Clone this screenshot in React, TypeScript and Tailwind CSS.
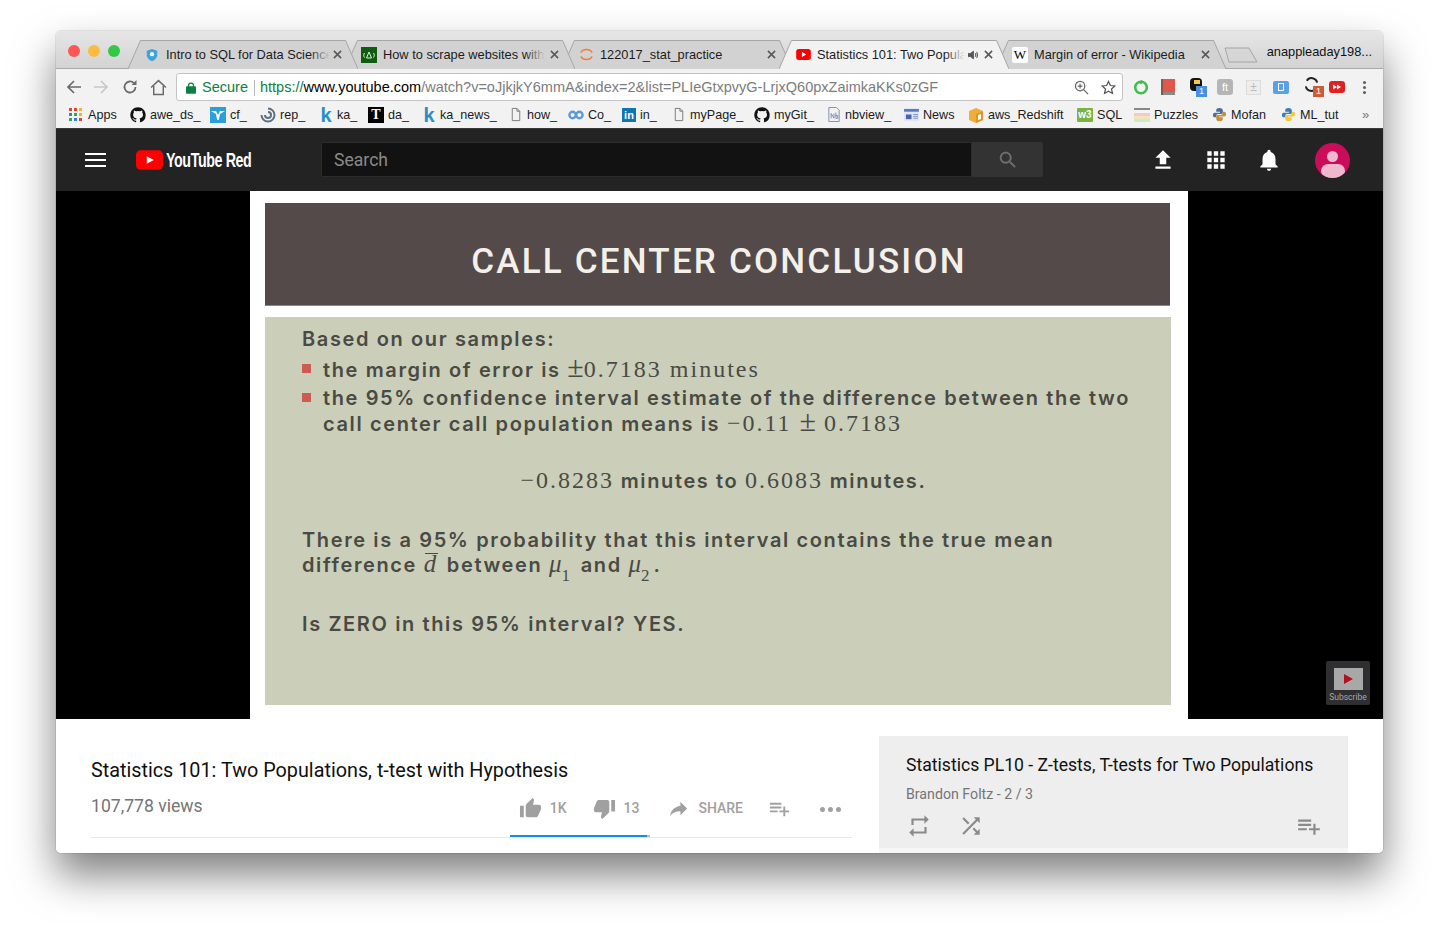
import React from "react";

const MD = ({ d, className }: { d: string; className?: string }) => (
  <svg viewBox="0 0 24 24" className={className} fill="currentColor"><path d={d} /></svg>
);
const P = {
  up: "M1 21h4V9H1v12zm22-11c0-1.1-.9-2-2-2h-6.31l.95-4.57.03-.32c0-.41-.17-.79-.44-1.06L14.17 1 7.59 7.59C7.22 7.95 7 8.45 7 9v10c0 1.1.9 2 2 2h9c.83 0 1.54-.5 1.84-1.22l3.02-7.05c.09-.23.14-.47.14-.73v-1.91l-.01-.01L23 10z",
  down: "M15 3H6c-.83 0-1.54.5-1.84 1.22l-3.02 7.05c-.09.23-.14.47-.14.73v1.91l.01.01L1 14c0 1.1.9 2 2 2h6.31l-.95 4.57-.03.32c0 .41.17.79.44 1.06L9.83 23l6.59-6.59c.36-.36.58-.86.58-1.41V5c0-1.1-.9-2-2-2zm4 0v12h4V3h-4z",
  share: "M14 9V5l7 7-7 7v-4.1c-5 0-8.5 1.6-11 5.1 1-5 4-10 11-11z",
  add: "M14 10H2v2h12v-2zm0-4H2v2h12V6zm4 8v-4h-2v4h-4v2h4v4h2v-4h4v-2h-4zM2 16h8v-2H2v2z",
  repeat: "M7 7h10v3l4-4-4-4v3H5v6h2V7zm10 10H7v-3l-4 4 4 4v-3h12v-6h-2v4z",
  shuffle: "M10.59 9.17L5.41 4 4 5.41l5.17 5.17 1.42-1.41zM14.5 4l2.04 2.04L4 18.59 5.41 20 17.96 7.46 20 9.5V4h-5.5zm.33 9.41l-1.41 1.41 3.13 3.13L14.5 20H20v-5.5l-2.04 2.04-3.13-3.13z",
  upload: "M9 16h6v-6h4l-7-7-7 7h4zm-4 2h14v2H5z",
  apps: "M4 8h4V4H4v4zm6 12h4v-4h-4v4zm-6 0h4v-4H4v4zm0-6h4v-4H4v4zm6 0h4v-4h-4v4zm6-10v4h4V4h-4zm-6 4h4V4h-4v4zm6 6h4v-4h-4v4zm0 6h4v-4h-4v4z",
  bell: "M12 22c1.1 0 2-.9 2-2h-4c0 1.1.89 2 2 2zm6-6v-5c0-3.07-1.64-5.64-4.5-6.32V4c0-.83-.67-1.5-1.5-1.5s-1.5.67-1.5 1.5v.68C7.63 5.36 6 7.92 6 11v5l-2 2v1h16v-1l-2-2z",
  search: "M15.5 14h-.79l-.28-.27C15.41 12.59 16 11.11 16 9.5 16 5.91 13.09 3 9.5 3S3 5.91 3 9.5 5.91 16 9.5 16c1.61 0 3.09-.59 4.23-1.57l.27.28v.79l5 4.99L20.49 19l-4.99-5zm-6 0C7.01 14 5 11.99 5 9.5S7.01 5 9.5 5 14 7.01 14 9.5 11.99 14 9.5 14z",
  github: "M12 .5C5.6.5.5 5.6.5 12c0 5.1 3.3 9.4 7.9 10.9.6.1.8-.2.8-.6v-2c-3.2.7-3.9-1.5-3.9-1.5-.5-1.3-1.3-1.7-1.3-1.7-1-.7.1-.7.1-.7 1.2.1 1.8 1.2 1.8 1.2 1 1.8 2.7 1.3 3.4 1 .1-.8.4-1.3.7-1.6-2.6-.3-5.3-1.3-5.3-5.7 0-1.3.5-2.3 1.2-3.1-.1-.3-.5-1.5.1-3.1 0 0 1-.3 3.2 1.2a11 11 0 0 1 5.8 0c2.2-1.5 3.2-1.2 3.2-1.2.6 1.6.2 2.8.1 3.1.7.8 1.2 1.9 1.2 3.1 0 4.4-2.7 5.4-5.3 5.7.4.4.8 1.1.8 2.2v3.2c0 .3.2.7.8.6A11.5 11.5 0 0 0 23.5 12C23.5 5.6 18.4.5 12 .5z",
};

const Doc = () => (
  <svg viewBox="0 0 14 16" className="w-[14px] h-[15px]" fill="none" stroke="#777" strokeWidth="1"><path d="M3 1.5h5l3 3v10H3zM8 1.5v3h3" /></svg>
);
const Gh = () => <MD d={P.github} className="w-4 h-4 text-[#111]" />;
const K = () => <span className="w-[14px] text-center text-[20px] leading-4 font-bold text-[#2b8fc4] [font-family:'Liberation_Sans',sans-serif]">k</span>;

const AppsI = () => (
  <div className="grid grid-cols-3 gap-[1.5px] w-[13px] h-[13px] mr-[2px]">
    {["bg-[#e0452f]","bg-[#e0452f]","bg-[#f0b429]","bg-[#3b78e7]","bg-[#2ea84f]","bg-[#f0b429]","bg-[#2ea84f]","bg-[#3b78e7]","bg-[#e0452f]"].map((c, i) => (
      <span key={i} className={c + " w-[3px] h-[3px]"} />
    ))}
  </div>
);
const Cf = () => (
  <div className="w-4 h-4 bg-[#2a9fd8] flex items-center justify-center text-white">
    <svg viewBox="0 0 16 16" className="w-4 h-4" fill="#fff"><path d="M1 4h5l2 4 2-4h5l-5 3-1.2 6H7.2L6 7z" /></svg>
  </div>
);
const Rep = () => (
  <svg viewBox="0 0 16 16" className="w-4 h-4" fill="none" stroke="#5c7080" strokeWidth="2"><path d="M8 1.500a6.500 6.500 0 1 1-6.500 6.500M8 5a3 3 0 1 1-3 3" /></svg>
);
const Tt = () => (
  <div className="w-4 h-4 bg-black text-white text-[14px] leading-4 font-bold text-center [font-family:'Liberation_Serif',serif]">T</div>
);
const Co = () => (
  <svg viewBox="0 0 16 10" className="w-4 h-[10px]" fill="none" stroke="#5b9bd5" strokeWidth="2.4"><circle cx="4.6" cy="5" r="3.2" /><circle cx="11.4" cy="5" r="3.2" /></svg>
);
const In = () => (
  <div className="w-[14px] h-[14px] bg-[#0f76b0] text-white text-[11px] leading-[14px] font-bold text-center [font-family:'Liberation_Sans',sans-serif]">in</div>
);
const Nb = () => (
  <svg viewBox="0 0 14 16" className="w-[14px] h-[15px]" fill="none" stroke="#6b83a8" strokeWidth="0.9"><path d="M1.5.5h8l3 3v12h-11zM4 12V7l3 5V7M9 6v6h2V9H9" /></svg>
);
const NewsI = () => (
  <svg viewBox="0 0 16 14" className="w-[15px] h-[13px]"><rect y="1" width="16" height="13" fill="#dfe5f2" /><rect y="1" width="16" height="3" fill="#5c79c6" /><rect x="2" y="7" width="6" height="5" fill="#4a63ad" /><path d="M10 7h5M10 9h5M10 11h5" stroke="#7a8cc0" /></svg>
);
const Aws = () => (
  <svg viewBox="0 0 16 16" className="w-4 h-4"><path d="M8 1l7 3v9l-7 3-7-3V4z" fill="#f0ad3a" /><path d="M8 7v9l7-3V4z" fill="#e0952a" /><path d="M10 8l3-1v5l-3 1z" fill="#fff" /></svg>
);
const W3 = () => (
  <div className="w-4 h-[14px] bg-[#7ab342] rounded-[1px] text-white text-[10px] leading-[14px] font-bold text-center [font-family:'Liberation_Sans',sans-serif]">w3</div>
);
const Puz = () => (
  <div className="w-4 h-[14px] flex flex-col">
    <span className="h-[2px] bg-[#888]" /><span className="h-[3px] bg-[#f4f4f4]" /><span className="h-[3px] bg-[#f3c9c9]" /><span className="h-[3px] bg-[#f2e6b8]" /><span className="h-[3px] bg-[#c9ecc6]" />
  </div>
);
const Py = ({ m }: { m?: boolean }) => (
  <svg viewBox="0 0 16 16" className="w-[15px] h-[15px]">
    <path d="M8 1C5 1 4.500 2 4.500 3.500V5H8.500V6H3C1.500 6 1 7 1 8.500S1.500 11 3 11H4.500V9.500C4.500 8 5.500 7.500 7 7.500H10C11 7.500 11.500 7 11.500 6V3.500C11.500 2 10.500 1 8 1z" fill={m ? "#48709a" : "#3f7cb5"} />
    <path d="M8 15C11 15 11.500 14 11.500 12.500V11H7.500V10H13C14.500 10 15 9 15 7.500S14.500 5 13 5H11.500V6.500C11.500 8 10.500 8.500 9 8.500H6C5 8.500 4.500 9 4.500 10V12.500C4.500 14 5.500 15 8 15z" fill={m ? "#c58f3a" : "#f3c83d"} />
  </svg>
);

const bookmarks: [React.ReactNode, string, string][] = [
  [<AppsI />, "Apps", "w-[61px]"],
  [<Gh />, "awe_ds_", "w-[80px]"],
  [<Cf />, "cf_", "w-[50px]"],
  [<Rep />, "rep_", "w-[59px]"],
  [<K />, "ka_", "w-[49px]"],
  [<Tt />, "da_", "w-[54px]"],
  [<K />, "ka_news_", "w-[87px]"],
  [<Doc />, "how_", "w-[59px]"],
  [<Co />, "Co_", "w-[54px]"],
  [<In />, "in_", "w-[50px]"],
  [<Doc />, "myPage_", "w-[82px]"],
  [<Gh />, "myGit_", "w-[73px]"],
  [<Nb />, "nbview_", "w-[77px]"],
  [<NewsI />, "News", "w-[64px]"],
  [<Aws />, "aws_Redshift", "w-[109px]"],
  [<W3 />, "SQL", "w-[57px]"],
  [<Puz />, "Puzzles", "w-[78px]"],
  [<Py m />, "Mofan", "w-[69px]"],
  [<Py />, "ML_tut", "w-[83px]"],
];

const Tab = ({ z, icon, title, active, fade, speaker, cls }: { z: string; icon: React.ReactNode; title: string; active?: boolean; fade?: boolean; speaker?: boolean; cls: string }) => (
  <div className={`relative h-[29px] w-[230px] shrink-0 ${z}`}>
    <svg viewBox="0 0 100 29" preserveAspectRatio="none" className="absolute inset-0 w-full h-full">
      <path d="M0 29 L5.400 0.500 L94.600 0.500 L100 29" fill={active ? "#f2f2f2" : "#d2d2d2"} stroke="#a6a6a6" strokeWidth="1" vectorEffect="non-scaling-stroke" />
    </svg>
    <div className="relative h-full flex items-center pl-[16px] pr-[16px]">
      <span className="w-[16px] h-[16px] shrink-0 flex items-center justify-center">{icon}</span>
      <span className={`relative ml-[6px] overflow-hidden whitespace-nowrap text-[12.800px] leading-4 text-[#1c1c1c] ${cls}`}>
        {title}
        {fade && <span className={`absolute right-0 top-0 h-full w-5 bg-gradient-to-r from-transparent ${active ? "to-[#f2f2f2]" : "to-[#d2d2d2]"}`} />}
      </span>
      {speaker && (
        <svg viewBox="0 0 14 12" className="w-[11px] h-[10px] ml-[3px] shrink-0" fill="#555"><path d="M0 4h3l4-3v10L3 8H0zM9 3.500c1 1.500 1 3.500 0 5M11 2c1.700 2.500 1.700 5.500 0 8" stroke="#555" strokeWidth="1" /></svg>
      )}
      <svg viewBox="0 0 10 10" className="ml-auto w-[9px] h-[9px] shrink-0" stroke="#5a5a5a" strokeWidth="1.800"><path d="M1 1l8 8M9 1l-8 8" /></svg>
    </div>
  </div>
);

const Mu = ({ n }: { n: string }) => (
  <span className="[font-family:'Liberation_Serif',serif] font-normal italic text-[25px] leading-[20px] tracking-[0px] mr-[4px]">
    μ<sub className="not-italic text-[17px] align-[-5px] leading-none">{n}</sub>
  </span>
);
const S = ({ children }: { children: React.ReactNode }) => (
  <span className="[font-family:'Liberation_Serif',serif] font-normal text-[24px] leading-[20px] tracking-[2px]">{children}</span>
);
const PM = () => <span className="text-[30px] leading-[20px] tracking-[0px]">±</span>;
const Bullet = () => <span className="w-[9px] h-[9px] bg-[#cd5b50] shrink-0 mt-[7px] mr-[12px]" />;

export default function App() {
  return (
    <div className="w-[1439px] h-[933px] bg-white pt-[31px] pl-[56px] overflow-hidden [font-family:'Liberation_Sans',Arial,sans-serif]">
      <div className="w-[1327px] h-[822px] rounded-[5px] overflow-hidden flex flex-col bg-white shadow-[0_0_0_1px_rgba(0,0,0,0.08),0_22px_42px_rgba(0,0,0,0.5)]">
        {/* tab strip */}
        <div className="h-[38px] shrink-0 bg-gradient-to-b from-[#e6e6e6] to-[#d3d3d3] border-b border-[#a9a9a9] flex items-end relative">
          <div className="flex gap-[8px] self-start mt-[14px] ml-[12px] mr-[8px]">
            <span className="w-3 h-3 rounded-full bg-[#fc5753]" />
            <span className="w-3 h-3 rounded-full bg-[#fdbc40]" />
            <span className="w-3 h-3 rounded-full bg-[#33c748]" />
          </div>
          <div className="flex items-end -mb-[1px] -space-x-[13px]">
            <Tab z="z-50" cls="w-[164px]" fade title="Intro to SQL for Data Science" icon={
              <svg viewBox="0 0 16 16" className="w-[14px] h-[14px]"><path d="M8 1l6 2v5c0 3.500-2.500 5.800-6 7-3.500-1.200-6-3.500-6-7V3z" fill="#3aa6d8" /><circle cx="8" cy="7" r="2.400" fill="#fff" /></svg>
            } />
            <Tab z="z-40" cls="w-[162px]" fade title="How to scrape websites with Python" icon={
              <div className="w-4 h-4 bg-[#0e5c12] flex items-center justify-center"><svg viewBox="0 0 16 16" className="w-4 h-4" fill="none" stroke="#d9f2d9" strokeWidth="1"><path d="M5.500 11L8 5l2.500 6zM3.500 6c-1 1.500-1 3 0 4.500M12.500 6c1 1.500 1 3 0 4.500" /></svg></div>
            } />
            <Tab z="z-30" cls="w-[140px]" title="122017_stat_practice" icon={
              <svg viewBox="0 0 16 16" className="w-[15px] h-[15px]" fill="none" stroke="#f1802e" strokeWidth="1.500"><path d="M2 6c2-4.500 10-4.500 12 0M2 10c2 4.500 10 4.500 12 0" /></svg>
            } />
            <Tab z="z-[60]" cls="w-[148px]" active fade speaker title="Statistics 101: Two Populations, t-test" icon={
              <svg viewBox="0 0 16 12" className="w-[15px] h-[11px]"><rect width="16" height="12" rx="3" fill="#f00" /><path d="M6.300 3.400L11 6 6.300 8.600z" fill="#fff" /></svg>
            } />
            <Tab z="z-10" cls="w-[156px]" title="Margin of error - Wikipedia" icon={
              <div className="w-4 h-4 bg-white rounded-[2px] text-[13px] leading-4 text-center text-black [font-family:'Liberation_Serif',serif]">W</div>
            } />
          </div>
          <svg viewBox="0 0 34 16" className="w-[34px] h-[16px] -ml-[2px] mb-[5px] shrink-0"><path d="M1 1H25L33 15H5z" fill="#d6d6d6" stroke="#a6a6a6" /></svg>
          <span className="absolute right-[11px] top-[13px] text-[12.800px] leading-4 text-[#111] z-10">anappleaday198...</span>
        </div>

        {/* toolbar */}
        <div className="h-[32px] shrink-0 bg-[#f2f2f2] flex items-center pt-[4px] pl-[10px] pr-[10px]">
          <svg viewBox="0 0 16 16" className="w-[16px] h-[16px] text-[#6a6a6a]" fill="none" stroke="currentColor" strokeWidth="1.700"><path d="M15 8H2M8 2L2 8l6 6" /></svg>
          <svg viewBox="0 0 16 16" className="w-[16px] h-[16px] ml-[11px] text-[#c8c8c8]" fill="none" stroke="currentColor" strokeWidth="1.700"><path d="M1 8h13M8 2l6 6-6 6" /></svg>
          <svg viewBox="0 0 16 16" className="w-[16px] h-[16px] ml-[13px] text-[#6a6a6a]" fill="none" stroke="currentColor" strokeWidth="1.800"><path d="M13.500 8A5.500 5.500 0 1 1 12 4.200" /><path d="M14.500 1v5h-5z" fill="currentColor" stroke="none" /></svg>
          <svg viewBox="0 0 16 16" className="w-[17px] h-[17px] ml-[12px] text-[#6a6a6a]" fill="none" stroke="currentColor" strokeWidth="1.400"><path d="M1 8l7-6.500L15 8M3.500 6.500V14.500h9V6.500" /></svg>
          <div className="ml-[9px] w-[947px] h-[28px] pt-[1px] bg-white border border-[#c4c4c4] rounded-[3px] flex items-center text-[14.500px] whitespace-nowrap">
            <svg viewBox="0 0 12 14" className="w-[10px] h-[12px] ml-[9px] shrink-0"><rect y="5" width="12" height="9" rx="1" fill="#0b8043" /><path d="M3 6V4a3 3 0 0 1 6 0v2" fill="none" stroke="#0b8043" strokeWidth="1.500" /></svg>
            <span className="ml-[6px] text-[#0b8043]">Secure</span>
            <span className="ml-[6px] w-px h-[16px] bg-[#b5b5b5]" />
            <span className="ml-[5px]">
              <span className="text-[#0b8043]">https://</span><span className="text-black">www.youtube.com</span><span className="text-[#7c7c7c]">/watch?v=oJjkjkY6mmA&amp;index=2&amp;list=PLIeGtxpvyG-LrjxQ60pxZaimkaKKs0zGF</span>
            </span>
            <svg viewBox="0 0 16 16" className="w-[15px] h-[15px] ml-auto shrink-0" fill="none" stroke="#666" strokeWidth="1.300"><circle cx="6.500" cy="6.500" r="5" /><path d="M10.300 10.300L15 15M4 6.500h5M6.500 4v5" /></svg>
            <svg viewBox="0 0 16 16" className="w-[15px] h-[15px] ml-[12px] mr-[6px] shrink-0" fill="none" stroke="#555" strokeWidth="1.300"><path d="M8 1.500l2 4.400 4.700.5-3.500 3.200 1 4.700L8 11.900l-4.200 2.400 1-4.700L1.300 6.400 6 5.900z" /></svg>
          </div>
          <div className="flex items-center ml-[10px]">
            <div className="relative w-[16px] h-[16px] mr-[12px]">
              <svg viewBox="0 0 16 16" className="w-[16px] h-[16px]" fill="none" stroke="#3fbf4f" strokeWidth="2.600"><circle cx="8" cy="8.500" r="5.800" /><path d="M9 1.500L7.500 5" stroke="#3fbf4f" strokeWidth="2" /></svg>
            </div>
            <svg viewBox="0 0 14 16" className="w-[14px] h-[16px] mr-[14px]"><rect width="14" height="14" fill="#e2574c" /><rect y="13" width="14" height="3" fill="#8a8a8a" /><rect width="2" height="16" fill="#7d5a50" /></svg>
            <div className="relative w-[18px] h-[20px] mr-[10px]">
              <span className="absolute left-[1px] top-[1px] w-[12px] h-[13px] bg-[#111] rounded-[4px]" />
              <span className="absolute left-[5px] top-[3px] w-[6px] h-[4px] bg-[#f0c94a]" />
              <span className="absolute right-0 bottom-0 w-[11px] h-[11px] bg-[#4a90e2] text-white text-[9px] leading-[11px] text-center">1</span>
            </div>
            <div className="w-[16px] h-[16px] mr-[13px] bg-[#b5b5b5] rounded-[3px] text-white text-[11px] leading-4 text-center">ft</div>
            <div className="w-[15px] h-[15px] mr-[12px] bg-[#ededed] border border-[#dcdcdc] text-[#bbb] text-[12px] leading-[13px] text-center">±</div>
            <div className="w-[16px] h-[13px] mr-[15px] bg-[#5aa0e8] rounded-[2px] flex items-center justify-center"><span className="w-[6px] h-[8px] border border-white" /></div>
            <div className="relative w-[20px] h-[20px] mr-[5px]">
              <svg viewBox="0 0 16 16" className="absolute left-0 top-0 w-[15px] h-[15px]" fill="none" stroke="#222" strokeWidth="2.200"><path d="M14 6A6 6 0 0 0 3 4M2 10a6 6 0 0 0 11 2" /></svg>
              <span className="absolute right-0 bottom-0 w-[11px] h-[11px] bg-[#cf5c36] text-white text-[9px] leading-[11px] text-center">1</span>
            </div>
            <svg viewBox="0 0 16 12" className="w-[16px] h-[12px]"><rect width="16" height="12" rx="3" fill="#e02020" /><path d="M4 3.500L8 6l-4 2.500zM8 3.500L12 6l-4 2.500z" fill="#fff" /></svg>
            <div className="ml-[18px] flex flex-col gap-[2px]">
              <span className="w-[3px] h-[3px] rounded-full bg-[#5f5f5f]" />
              <span className="w-[3px] h-[3px] rounded-full bg-[#5f5f5f]" />
              <span className="w-[3px] h-[3px] rounded-full bg-[#5f5f5f]" />
            </div>
          </div>
        </div>

        {/* bookmarks */}
        <div className="h-[28px] shrink-0 bg-[#f2f2f2] border-b border-[#3a3a3a] flex items-center pl-[13px] relative">
          {bookmarks.map(([ic, label, w], i) => (
            <div key={i} className={`${w} shrink-0 flex items-center gap-[4px]`}>
              <span className="shrink-0 flex items-center justify-center">{ic}</span>
              <span className="text-[12.600px] leading-4 text-[#1b1b1b] whitespace-nowrap">{label}</span>
            </div>
          ))}
          <span className="text-[13px] leading-4 text-[#777] -ml-[2px]">»</span>
        </div>

        {/* YouTube header */}
        <div className="h-[62px] shrink-0 bg-[#232323] flex items-center pl-[29px] pr-[33px] [font-family:Roboto,sans-serif]">
          <div className="flex flex-col gap-[4px] w-[21px]">
            <span className="h-[2px] bg-white" /><span className="h-[2px] bg-white" /><span className="h-[2px] bg-white" />
          </div>
          <svg viewBox="0 0 28 20" className="ml-[30px] w-[27px] h-[20px] shrink-0"><rect width="28" height="20" rx="4.500" fill="#f00" /><path d="M11.200 6l7.200 4-7.200 4z" fill="#fff" /></svg>
          <div className="w-[86px] ml-[3px] shrink-0">
            <span className="block origin-left scale-x-[0.68] whitespace-nowrap text-[21px] leading-6 font-bold tracking-[-0.6px] text-white [font-family:'Liberation_Sans',sans-serif]">YouTube Red</span>
          </div>
          <div className="ml-[69px] mb-[1px] pt-[2px] w-[651px] h-[35px] bg-[#121212] border border-[#2c2c2c] rounded-l-[2px] flex items-center pl-[12px] text-[17.600px] text-[#8a8a8a]">Search</div>
          <div className="mb-[1px] w-[71px] h-[35px] bg-[#333] rounded-r-[2px] flex items-center justify-center text-[#6f6f6f]">
            <MD d={P.search} className="w-[22px] h-[22px]" />
          </div>
          <MD d={P.upload} className="ml-[107px] w-[26px] h-[26px] text-white" />
          <MD d={P.apps} className="ml-[27px] w-[26px] h-[26px] text-white" />
          <MD d={P.bell} className="ml-[27px] w-[26px] h-[26px] text-white" />
          <div className="ml-auto w-[35px] h-[35px] rounded-full bg-[#cb0c5a] overflow-hidden flex flex-col items-center pt-[8px]">
            <span className="w-[11px] h-[11px] rounded-full bg-[#f0b8cf]" />
            <span className="w-[24px] h-[14px] rounded-full bg-[#f0b8cf] mt-[2px]" />
          </div>
        </div>

        {/* player */}
        <div className="h-[528px] shrink-0 bg-black pl-[194px] relative">
          <div className="w-[938px] h-full bg-white pt-[12px] pl-[15px]">
            <div className="h-[103px] w-[905px] bg-[#554a4a] border-b border-[#8a8484] flex items-center justify-center pt-[16px] pl-[3px] text-[35px] tracking-[2.200px] text-[#f3f0ea] whitespace-nowrap">
              <span className="[font-family:Roboto,sans-serif] font-medium">CALL CENTER CONCLUSION</span>
            </div>
            <div className="mt-[11px] h-[388px] w-[906px] bg-[#cbcfb9] pt-[10px] pl-[37px] text-[20px] leading-[25px] tracking-[1.620px] text-[#4a4a44] font-semibold whitespace-nowrap [font-family:Inter,sans-serif]">
              <div className="h-[25px]">Based on our samples:</div>
              <div className="flex mt-[5px] h-[25px]"><Bullet /><div>the margin of error is <S><PM />0.7183 minutes</S></div></div>
              <div className="flex mt-[4px] h-[24.500px]"><Bullet /><div className="leading-[24.500px]">the 95% confidence interval estimate of the difference between the two</div></div>
              <div className="h-[24.500px] pl-[21px] leading-[23.500px]">call center call population means is <S>−0.11 <PM /> 0.7183</S></div>
              <div className="mt-[34px] h-[25px] text-center pr-[26px]"><S>−0.8283</S> minutes to <S>0.6083</S> minutes.</div>
              <div className="mt-[34px] h-[25px]">There is a 95% probability that this interval contains the true mean</div>
              <div className="h-[25px]">difference <span className="relative inline-block mr-[4px] [font-family:'Liberation_Serif',serif] font-normal italic text-[25px] leading-[20px] tracking-[0px]">d<span className="absolute left-[1px] right-[-2px] top-[-1px] h-px bg-[#4a4a44]" /></span> between <Mu n="1" /> and <Mu n="2" />.</div>
              <div className="mt-[34px] h-[25px]">Is ZERO in this 95% interval? YES.</div>
            </div>
          </div>
          <div className="absolute right-[13px] bottom-[14px] w-[44px] h-[44px] rounded-[2px] bg-[#2f2f31] flex flex-col items-center pt-[7px]">
            <div className="w-[29px] h-[22px] bg-[#a8a8a8] flex items-center justify-center">
              <svg viewBox="0 0 10 10" className="w-[10px] h-[10px]"><path d="M1 0l9 5-9 5z" fill="#b01020" /></svg>
            </div>
            <span className="text-[8.500px] leading-[10px] mt-[2px] text-[#a8a8a8] [font-family:Roboto,sans-serif]">Subscribe</span>
          </div>
        </div>

        {/* below player */}
        <div className="flex-1 min-h-0 bg-white flex [font-family:Roboto,sans-serif]">
          <div className="ml-[35px] w-[761px] flex flex-col">
            <div className="mt-[39px] text-[19.800px] leading-[26px] text-[#0f0f0f]">Statistics 101: Two Populations, t-test with Hypothesis</div>
            <div className="mt-[8px] flex items-center h-[28px]">
              <span className="text-[17.600px] leading-6 text-[#757575]">107,778 views</span>
              <div className="ml-auto mt-[4px] flex items-center text-[14px] font-medium text-[#a0a0a0]">
                <MD d={P.up} className="w-[23px] h-[23px] text-[#a0a0a0]" />
                <span className="ml-[8px]">1K</span>
                <MD d={P.down} className="ml-[26px] w-[23px] h-[23px] text-[#a0a0a0]" />
                <span className="ml-[8px]">13</span>
                <MD d={P.share} className="ml-[28px] w-[23px] h-[23px] text-[#a0a0a0]" />
                <span className="ml-[8px]">SHARE</span>
                <MD d={P.add} className="ml-[25px] w-[23px] h-[23px] text-[#a0a0a0]" />
                <div className="ml-[29px] mr-[11px] mt-[3px] flex gap-[3px]">
                  <span className="w-[5px] h-[5px] rounded-full bg-[#a0a0a0]" />
                  <span className="w-[5px] h-[5px] rounded-full bg-[#a0a0a0]" />
                  <span className="w-[5px] h-[5px] rounded-full bg-[#a0a0a0]" />
                </div>
              </div>
            </div>
            <div className="mt-[16px] h-[2px] flex items-end border-b border-[#e8e8e8]">
              <div className="ml-[419px] w-[137px] h-[2px] bg-[#1090e0]" />
              <div className="w-[3px] h-[2px] bg-[#bbb]" />
            </div>
          </div>
          <div className="ml-[27px] w-[469px] mt-[17px] h-[117px] flex flex-col">
            <div className="h-[112px] bg-[#eeeeee] pt-[17px] pl-[27px] pr-[26px]">
              <div className="text-[17.600px] leading-6 text-[#111] whitespace-nowrap">Statistics PL10 - Z-tests, T-tests for Two Populations</div>
              <div className="mt-[7px] text-[14.200px] leading-5 text-[#757575]">Brandon Foltz - 2 / 3</div>
              <div className="mt-[9px] flex items-center text-[#8a8a8a]">
                <MD d={P.repeat} className="w-[26px] h-[26px]" />
                <MD d={P.shuffle} className="ml-[26px] w-[26px] h-[26px]" />
                <MD d={P.add} className="ml-auto w-[26px] h-[26px]" />
              </div>
            </div>
            <div className="h-[5px] bg-[#f6f6f6]" />
          </div>
        </div>
      </div>
    </div>
  );
}
